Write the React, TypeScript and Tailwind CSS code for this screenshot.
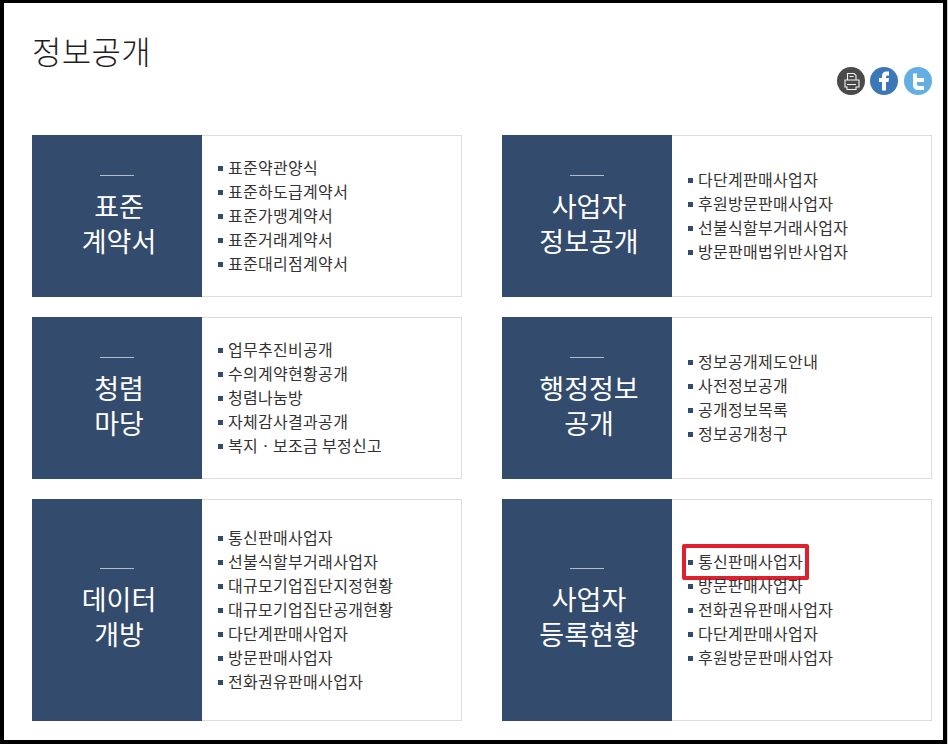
const font = "font-['Noto_Sans_CJK_KR','Noto_Sans',sans-serif]";

type Board = {
    title: string[];
    links: string[];
    boxed?: string;
};

const topRow: Board[] = [
    { title: ["표준", "계약서"], links: ["표준약관양식", "표준하도급계약서", "표준가맹계약서", "표준거래계약서", "표준대리점계약서"] },
    { title: ["사업자", "정보공개"], links: ["다단계판매사업자", "후원방문판매사업자", "선불식할부거래사업자", "방문판매법위반사업자"] },
];

const middleRow: Board[] = [
    { title: ["청렴", "마당"], links: ["업무추진비공개", "수의계약현황공개", "청렴나눔방", "자체감사결과공개", "복지ㆍ보조금 부정신고"] },
    { title: ["행정정보", "공개"], links: ["정보공개제도안내", "사전정보공개", "공개정보목록", "정보공개청구"] },
];

const bottomRow: Board[] = [
    { title: ["데이터", "개방"], links: ["통신판매사업자", "선불식할부거래사업자", "대규모기업집단지정현황", "대규모기업집단공개현황", "다단계판매사업자", "방문판매사업자", "전화권유판매사업자"] },
    { title: ["사업자", "등록현황"], links: ["통신판매사업자", "방문판매사업자", "전화권유판매사업자", "다단계판매사업자", "후원방문판매사업자"], boxed: "통신판매사업자" },
];

function BoardCard({ board, tall }: { board: Board; tall?: boolean }) {
    return (
        <div className={tall ? "flex h-[222px] w-[430px]" : "flex h-[162px] w-[430px]"}>
            <div className={tall
                ? "flex w-[170px] shrink-0 flex-col items-center justify-center bg-[#334b6c] pb-[2px] pl-[4px] text-white"
                : "flex w-[170px] shrink-0 flex-col items-center justify-center bg-[#334b6c] pl-[4px] text-white"}>
                <div className="mb-[12px] mr-[4px] h-px w-[34px] bg-[#b4bdca]" />
                <div className="text-center text-[27px] leading-[35px]">
                    {board.title[0]}
                    <br />
                    {board.title[1]}
                </div>
            </div>
            <div className="flex flex-1 flex-col justify-center border border-l-0 border-[#dcdcdc] pl-[16px]">
                {board.links.map((link) => (
                    <div key={link} className="relative flex h-[24px] items-center text-[16px] tracking-[0.3px] text-[#333333]">
                        <span className="mr-[5px] h-[5px] w-[5px] bg-[#334b6c]" />
                        <span className="mb-[2px]">{link}</span>
                        {board.boxed === link && (
                            <span className="absolute left-[-6px] top-[-6px] h-[36px] w-[127px] rounded-[2px] border-[4px] border-[#e0202c]" />
                        )}
                    </div>
                ))}
            </div>
        </div>
    );
}

export default function App() {
    return (
        <div className={`${font} h-[744px] w-[948px] bg-[#d0d0d0]`}>
            <div className="h-[744px] w-[947px] border-[4px] border-t-[3px] border-black bg-white pl-[28px] pr-[11px]">
                <div className="flex h-[132px] items-start justify-between">
                    <h1 className="mt-[23px] text-[32px] leading-[48px] font-light tracking-[0.3px] text-[#1f1f1f]">정보공개</h1>
                    <div className="mt-[64px] flex gap-[5px]">
                        <svg width="28" height="28" viewBox="0 0 28 28">
                            <circle cx="14" cy="14" r="14" fill="#4a4a4a" />
                            <path d="M10.500 13V6.500h6.500l2 2V13M8 13h14v7h-3v2.500h-9V20H8zM10 17.500h9M12.500 9.500h4" fill="none" stroke="#f2f2f2" strokeWidth="1.1" />
                        </svg>
                        <svg width="28" height="28" viewBox="0 0 28 28">
                            <circle cx="14" cy="14" r="14" fill="#3d78b6" />
                            <path d="M12 23.500V15H9v-4h3V9c0-3 1.700-4.500 4.500-4.500H19v4h-1.500c-1.200 0-1.500.500-1.500 1.500v1h3l-.500 4H16v8.500z" fill="#fff" />
                        </svg>
                        <svg className="ml-[1px]" width="28" height="28" viewBox="0 0 28 28">
                            <circle cx="14" cy="14" r="14" fill="#63aee3" />
                            <path d="M9 6.500h4V11h7v4h-7v2c0 1 .500 2 2 2h5v4h-6c-3 0-5-2-5-5z" fill="#fff" />
                        </svg>
                    </div>
                </div>
                <div className="flex justify-between"><BoardCard board={topRow[0]} /><BoardCard board={topRow[1]} /></div>
                <div className="mt-[20px] flex justify-between"><BoardCard board={middleRow[0]} /><BoardCard board={middleRow[1]} /></div>
                <div className="mt-[20px] flex justify-between"><BoardCard board={bottomRow[0]} tall /><BoardCard board={bottomRow[1]} tall /></div>
            </div>
        </div>
    );
}
